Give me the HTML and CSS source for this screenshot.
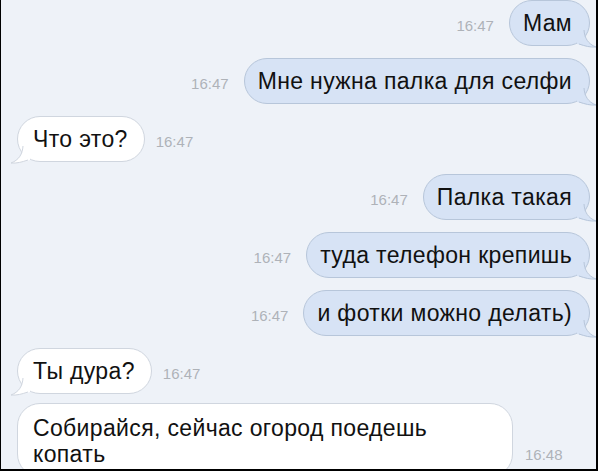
FILE: index.html
```html
<!DOCTYPE html>
<html lang="ru">
<head>
<meta charset="utf-8">
<title>Чат</title>
<link rel="stylesheet" href="styles.css">
</head>
<body>
<div class="frame">
  <div class="chat">
    <div class="row out r1">
      <span class="time">16:47</span>
      <div class="bubble">Мам<svg class="tail" viewBox="0 0 14 18" width="14" height="18"><path class="tf" d="M0 0 C1 8 5 14 13 17 C7 17.5 2 16 -6 14 L-6 0 Z"/><path class="ts" d="M1 0 C1.5 8 5 14 13 17 C7 17.5 2 16 -4 14"/></svg></div>
    </div>
    <div class="row out">
      <span class="time">16:47</span>
      <div class="bubble">Мне нужна палка для селфи<svg class="tail" viewBox="0 0 14 18" width="14" height="18"><path class="tf" d="M0 0 C1 8 5 14 13 17 C7 17.5 2 16 -6 14 L-6 0 Z"/><path class="ts" d="M1 0 C1.5 8 5 14 13 17 C7 17.5 2 16 -4 14"/></svg></div>
    </div>
    <div class="row in">
      <div class="bubble">Что это?<svg class="tail" viewBox="0 0 14 18" width="14" height="18"><path class="tf" d="M14 0 C13 8 9 14 1 17 C7 17.5 12 16 20 14 L20 0 Z"/><path class="ts" d="M13 0 C12.5 8 9 14 1 17 C7 17.5 12 16 18 14"/></svg></div>
      <span class="time">16:47</span>
    </div>
    <div class="row out">
      <span class="time">16:47</span>
      <div class="bubble">Палка такая<svg class="tail" viewBox="0 0 14 18" width="14" height="18"><path class="tf" d="M0 0 C1 8 5 14 13 17 C7 17.5 2 16 -6 14 L-6 0 Z"/><path class="ts" d="M1 0 C1.5 8 5 14 13 17 C7 17.5 2 16 -4 14"/></svg></div>
    </div>
    <div class="row out">
      <span class="time">16:47</span>
      <div class="bubble">туда телефон крепишь<svg class="tail" viewBox="0 0 14 18" width="14" height="18"><path class="tf" d="M0 0 C1 8 5 14 13 17 C7 17.5 2 16 -6 14 L-6 0 Z"/><path class="ts" d="M1 0 C1.5 8 5 14 13 17 C7 17.5 2 16 -4 14"/></svg></div>
    </div>
    <div class="row out">
      <span class="time">16:47</span>
      <div class="bubble">и фотки можно делать)<svg class="tail" viewBox="0 0 14 18" width="14" height="18"><path class="tf" d="M0 0 C1 8 5 14 13 17 C7 17.5 2 16 -6 14 L-6 0 Z"/><path class="ts" d="M1 0 C1.5 8 5 14 13 17 C7 17.5 2 16 -4 14"/></svg></div>
    </div>
    <div class="row in">
      <div class="bubble">Ты дура?<svg class="tail" viewBox="0 0 14 18" width="14" height="18"><path class="tf" d="M14 0 C13 8 9 14 1 17 C7 17.5 12 16 20 14 L20 0 Z"/><path class="ts" d="M13 0 C12.5 8 9 14 1 17 C7 17.5 12 16 18 14"/></svg></div>
      <span class="time">16:47</span>
    </div>
    <div class="row in last">
      <div class="bubble wide">Собирайся, сейчас огород поедешь копать</div>
      <span class="time">16:48</span>
    </div>
  </div>
</div>
</body>
</html>
```
FILE: styles.css
```css
html, body {
  margin: 0;
  padding: 0;
  background: #000;
}
.frame {
  width: 595px;
  height: 469px;
  margin-left: 1px;
  background: #eef2f8;
  overflow: hidden;
}
.chat {
  display: flex;
  flex-direction: column;
  gap: 12px;
  padding: 2px 6px 0 16px;
  font-family: "Liberation Sans", Arial, sans-serif;
}
.r1 { margin-top: -2px; }
.row {
  display: flex;
  align-items: flex-end;
}
.row.out { justify-content: flex-end; }
.time {
  font-size: 15px;
  color: #aeb2b8;
  margin-bottom: 12px;
  line-height: 16px;
}
.out .time { margin-right: 15px; }
.in .time { margin-left: 11px; }
.bubble {
  position: relative;
  font-size: 23px;
  letter-spacing: 0.35px;
  line-height: 26px;
  color: #111;
  border-radius: 23px;
}
.out .bubble {
  background: #d7e3f5;
  border: 1px solid #b7c6da;
  padding: 9px 17px 9px 13px;
}
.in .bubble {
  background: #fff;
  border: 1px solid #d0d6df;
  padding: 9px 16px 9px 15px;
}
.tail {
  position: absolute;
  bottom: -3px;
  overflow: visible;
}
.out .tail { right: -8px; }
.in .tail { left: -8px; }
.out .tf { fill: #d7e3f5; }
.out .ts { fill: none; stroke: #b7c6da; stroke-width: 1; }
.in .tf { fill: #fff; }
.in .ts { fill: none; stroke: #d0d6df; stroke-width: 1; }
.wide {
  width: 496px;
  box-sizing: border-box;
}
.in .bubble.wide { padding-right: 50px; padding-top: 11px; }
.last .time { margin-left: 12px; margin-bottom: 14px; }
.last { margin-top: -3px; margin-bottom: -40px; }
```
